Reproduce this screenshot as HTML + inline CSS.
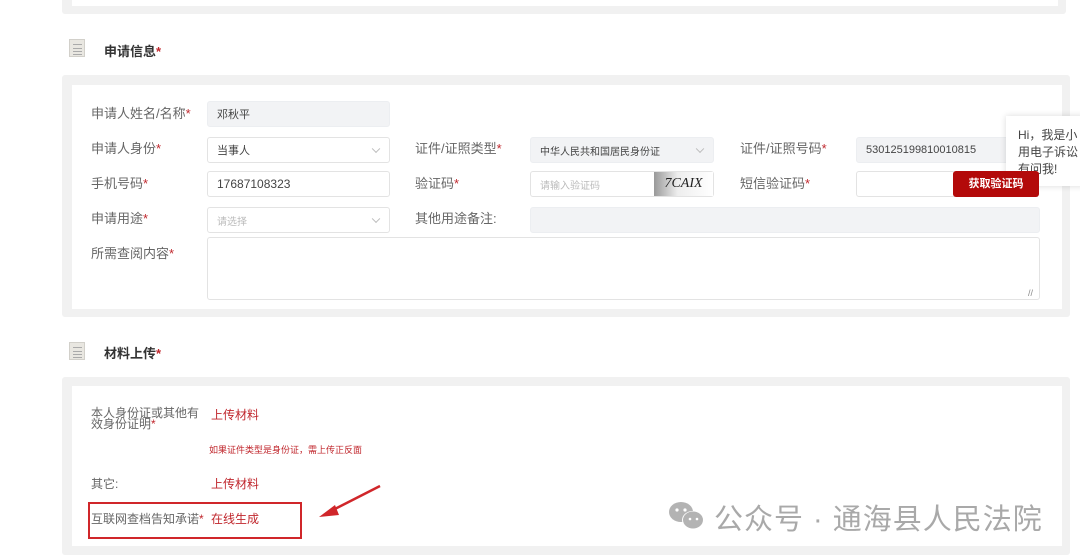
<!DOCTYPE html>
<html><head><meta charset="utf-8"><style>
*{margin:0;padding:0;box-sizing:border-box}
body{width:1080px;height:558px;background:#fff;position:relative;overflow:hidden;font-family:"Liberation Sans","Noto Sans CJK SC",sans-serif;color:#555}
.a{position:absolute}
.panel{position:absolute;background:#f1f1f1;border-radius:3px}
.inner{position:absolute;background:#fff}
.lbl{position:absolute;font-size:13px;color:#666;white-space:nowrap;line-height:15px}
.s{color:#c0272d}
.inp{position:absolute;border:1px solid #e3e3e3;border-radius:3px;background:#fff;font-size:11px;color:#444;padding-left:9px;display:flex;align-items:center}
.dis{background:#f2f3f5;border-color:#eceef1}
.ch{position:absolute;right:10px;top:50%;width:6px;height:6px;border-right:1px solid #bbb;border-bottom:1px solid #bbb;transform:translateY(-70%) rotate(45deg)}
.icon{position:absolute;width:16px;height:18px;background:#e9e7e1;border:1px solid #d2d0ca}
.icon i{position:absolute;left:3px;height:1px;background:#aaa;width:9px}
.hd{position:absolute;font-size:13px;font-weight:bold;color:#333}
.red{color:#c0272d}
.m{font-size:12px}
</style></head><body>
<div class="panel" style="left:62px;top:-10px;width:1004px;height:24px"></div>
<div class="inner" style="left:72px;top:-10px;width:986px;height:16px"></div>

<div class="icon" style="left:69px;top:39px"><i style="top:4px"></i><i style="top:8px"></i><i style="top:11px"></i><i style="top:14px"></i></div>
<div class="hd" style="left:104px;top:41px">申请信息<span class="s">*</span></div>

<div class="panel" style="left:62px;top:75px;width:1008px;height:242px"></div>
<div class="inner" style="left:72px;top:85px;width:990px;height:224px"></div>

<div class="lbl" style="left:91px;top:106px">申请人姓名/名称<span class="s">*</span></div>
<div class="inp dis" style="left:207px;top:101px;width:183px;height:26px">邓秋平</div>

<div class="lbl" style="left:91px;top:141px">申请人身份<span class="s">*</span></div>
<div class="inp" style="left:207px;top:137px;width:183px;height:26px">当事人<span class="ch"></span></div>
<div class="lbl" style="left:415px;top:141px">证件/证照类型<span class="s">*</span></div>
<div class="inp dis" style="left:530px;top:137px;width:184px;height:26px;font-size:10px">中华人民共和国居民身份证<span class="ch"></span></div>
<div class="lbl" style="left:740px;top:141px">证件/证照号码<span class="s">*</span></div>
<div class="inp dis" style="left:856px;top:137px;width:184px;height:26px">530125199810010815</div>

<div class="lbl" style="left:91px;top:176px">手机号码<span class="s">*</span></div>
<div class="inp" style="left:207px;top:171px;width:183px;height:26px;font-size:12px">17687108323</div>
<div class="lbl" style="left:415px;top:176px">验证码<span class="s">*</span></div>
<div class="inp" style="left:530px;top:171px;width:184px;height:26px;color:#bbb;font-size:10px">请输入验证码</div>
<div class="a" style="left:654px;top:172px;width:59px;height:24px;background:linear-gradient(90deg,#999,#eee 40%,#fff);font:italic 14px 'Liberation Serif',serif;color:#222;text-align:center;line-height:24px">7CAIX</div>
<div class="lbl" style="left:740px;top:176px">短信验证码<span class="s">*</span></div>
<div class="inp" style="left:856px;top:171px;width:100px;height:26px"></div>

<div class="lbl" style="left:91px;top:211px">申请用途<span class="s">*</span></div>
<div class="inp" style="left:207px;top:207px;width:183px;height:26px;color:#bbb;font-size:10px">请选择<span class="ch"></span></div>
<div class="lbl" style="left:415px;top:211px">其他用途备注:</div>
<div class="inp dis" style="left:530px;top:207px;width:510px;height:26px"></div>

<div class="lbl" style="left:91px;top:246px">所需查阅内容<span class="s">*</span></div>
<div class="inp" style="left:207px;top:237px;width:833px;height:63px"></div>
<div class="a" style="left:1028px;top:288px;font-size:9px;color:#888">//</div>

<div class="a" style="left:1006px;top:116px;width:80px;height:70px;background:#fff;box-shadow:0 0 6px rgba(0,0,0,.15);font-size:12px;color:#444;line-height:17px;padding:11px 0 0 12px;white-space:nowrap">Hi，我是小<br>用电子诉讼<br>有问我!</div>
<div class="a" style="left:953px;top:171px;width:86px;height:26px;background:#b30a0a;border-radius:3px;color:#fff;font-size:11px;font-weight:bold;text-align:center;line-height:26px">获取验证码</div>

<div class="icon" style="left:69px;top:342px"><i style="top:4px"></i><i style="top:8px"></i><i style="top:11px"></i><i style="top:14px"></i></div>
<div class="hd" style="left:104px;top:343px">材料上传<span class="s">*</span></div>

<div class="panel" style="left:62px;top:377px;width:1008px;height:178px"></div>
<div class="inner" style="left:72px;top:386px;width:990px;height:160px"></div>

<div class="lbl m" style="left:91px;top:408px;line-height:11px">本人身份证或其他有<br>效身份证明<span class="s">*</span></div>
<div class="lbl red m" style="left:211px;top:408px">上传材料</div>
<div class="lbl red" style="left:209px;top:443px;font-size:9px">如果证件类型是身份证，需上传正反面</div>
<div class="lbl m" style="left:91px;top:477px">其它:</div>
<div class="lbl red m" style="left:211px;top:477px">上传材料</div>
<div class="a" style="left:88px;top:502px;width:214px;height:37px;border:2px solid #d0262a"></div>
<div class="lbl m" style="left:91px;top:512px">互联网查档告知承诺<span class="s">*</span></div>
<div class="lbl m" style="left:211px;top:512px;color:#c0272d">在线生成</div>

<svg class="a" style="left:315px;top:483px" width="70" height="38"><line x1="65" y1="3" x2="12" y2="30" stroke="#d0262a" stroke-width="2.5"/><polygon points="4,34 20,22 24,32" fill="#d0262a"/></svg>

<svg class="a" style="left:666px;top:499px" width="42" height="34"><ellipse cx="15" cy="13" rx="12" ry="10" fill="#b3b3b3"/><ellipse cx="27" cy="21" rx="11" ry="9" fill="#fff"/><ellipse cx="27" cy="21" rx="10" ry="8.5" fill="#b3b3b3"/><circle cx="11" cy="11" r="1.6" fill="#fff"/><circle cx="19" cy="11" r="1.6" fill="#fff"/><circle cx="24" cy="20" r="1.3" fill="#fff"/><circle cx="31" cy="20" r="1.3" fill="#fff"/></svg>
<div class="a" style="left:714px;top:496px;font-size:29px;color:#a9a9a9;white-space:nowrap;letter-spacing:1px">公众号 · 通海县人民法院</div>
</body></html>
